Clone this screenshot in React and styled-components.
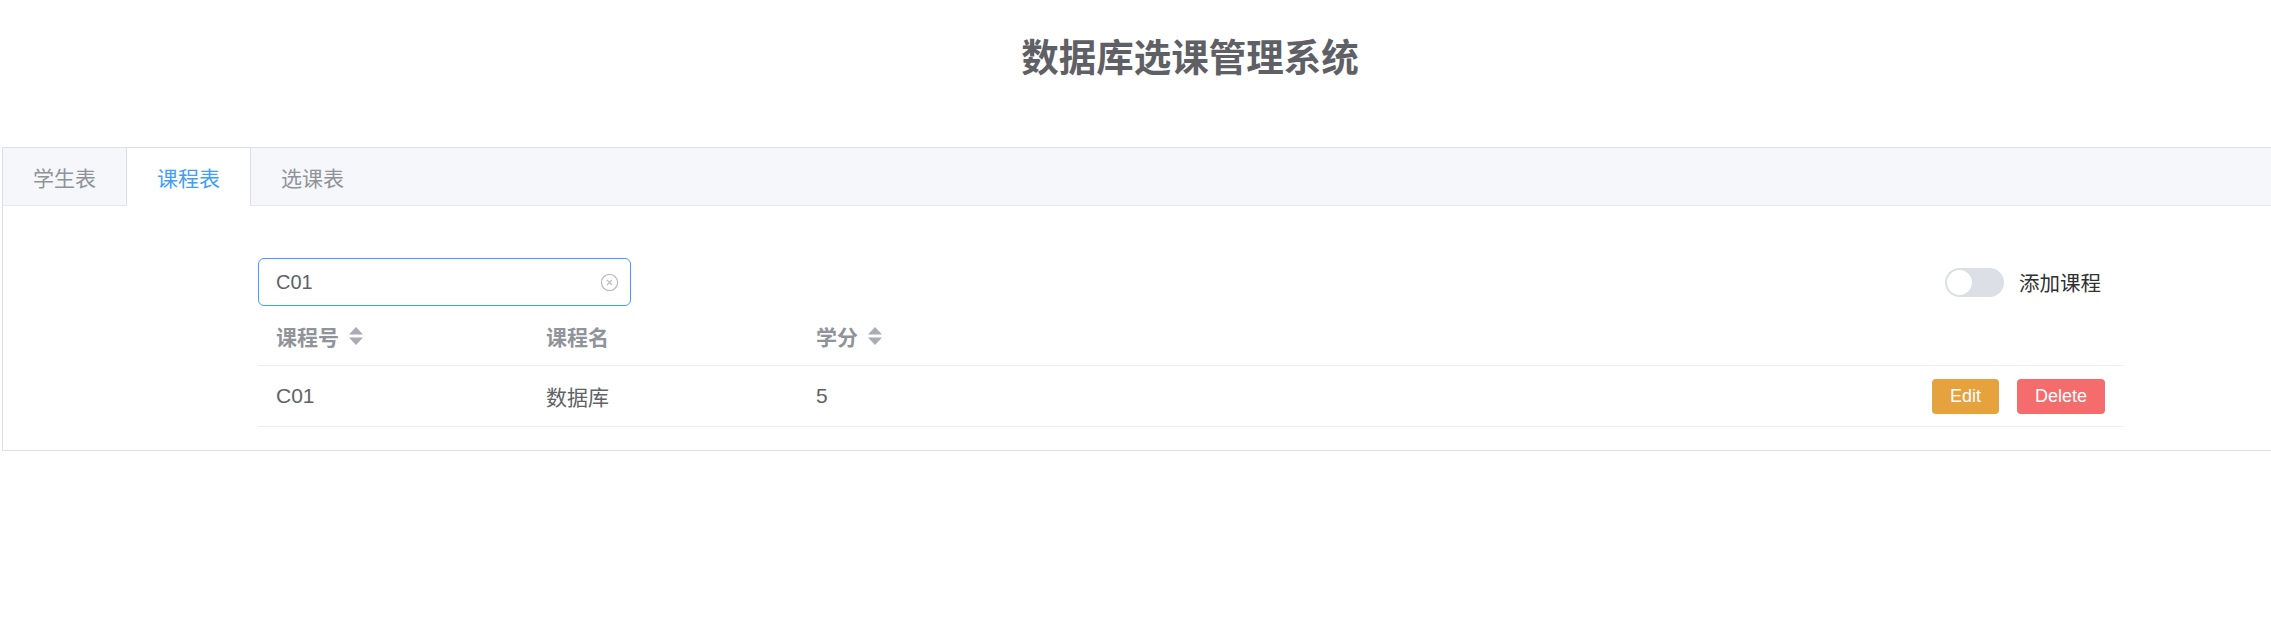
import React from "react";
import styled, { createGlobalStyle } from "styled-components";

const courses = [{ id: "C01", name: "数据库", credit: 5 }];
const tabs = ["学生表", "课程表", "选课表"];

const GlobalStyle = createGlobalStyle`
  html, body {
    margin: 0;
    padding: 0;
    background: #ffffff;
    overflow: hidden;
  }
  body {
    font-family: "Liberation Sans", "Noto Sans CJK SC", sans-serif;
    color: #606266;
  }
`;

const SortIcon = () => (
  <SortCaret viewBox="0 0 16 22" width="16" height="22">
    <path d="M8 2 L15 9.5 L1 9.5 Z" fill="#a9acb3" />
    <path d="M8 20 L15 12.5 L1 12.5 Z" fill="#a9acb3" />
  </SortCaret>
);

const ClearIcon = () => (
  <svg viewBox="0 0 20 20" width="19" height="19">
    <circle cx="10" cy="10" r="8.5" fill="none" stroke="#b9bcc3" strokeWidth="1.3" />
    <path d="M7.3 7.3 L12.7 12.7 M12.7 7.3 L7.3 12.7" stroke="#b9bcc3" strokeWidth="1.3" />
  </svg>
);

export default function App() {
  return (
    <Page>
      <GlobalStyle />
      <Title>数据库选课管理系统</Title>
      <Card>
        <TabNav>
          {tabs.map((t, i) => (
            <Tab key={t} active={i === 1}>
              {t}
            </Tab>
          ))}
        </TabNav>
        <Content>
          <Toolbar>
            <SearchBox>
              <SearchInput value="C01" readOnly spellCheck />
              <ClearIcon />
            </SearchBox>
            <SwitchWrap>
              <Switch>
                <Knob />
              </Switch>
              <SwitchLabel>添加课程</SwitchLabel>
            </SwitchWrap>
          </Toolbar>
          <HeadRow>
            <HeadCell>
              课程号 <SortIcon />
            </HeadCell>
            <HeadCell>课程名</HeadCell>
            <HeadCell>
              学分 <SortIcon />
            </HeadCell>
            <HeadCell />
          </HeadRow>
          {courses.map((c) => (
            <Row key={c.id}>
              <Cell>{c.id}</Cell>
              <Cell>{c.name}</Cell>
              <Cell>{c.credit}</Cell>
              <Actions>
                <Button color="#e6a23c">Edit</Button>
                <Button color="#f56c6c">Delete</Button>
              </Actions>
            </Row>
          ))}
        </Content>
      </Card>
    </Page>
  );
}

const Page = styled.div`
  width: 2380px;
`;

const Title = styled.h1`
  margin: 0;
  height: 110px;
  line-height: 110px;
  text-align: center;
  font-size: 37.5px;
  font-weight: bold;
  color: #5f6066;
  font-family: "Noto Sans CJK SC", sans-serif;
`;

const Card = styled.div`
  margin: 37px 0 0 2px;
  width: 2378px;
  box-sizing: border-box;
  border: 1px solid #dcdfe6;
  background: #ffffff;
`;

const TabNav = styled.div`
  display: flex;
  height: 57px;
  background: #f5f7fa;
  border-bottom: 1px solid #e4e7ed;
`;

const Tab = styled.div`
  display: flex;
  align-items: center;
  padding: 0 ${(p) => (p.active ? "30px" : "29px")};
  height: 58px;
  box-sizing: border-box;
  font-size: 21px;
  font-family: "Noto Sans CJK SC", sans-serif;
  color: ${(p) => (p.active ? "#409eff" : "#909399")};
  background: ${(p) => (p.active ? "#ffffff" : "transparent")};
  border-left: 1px solid ${(p) => (p.active ? "#dcdfe6" : "transparent")};
  border-right: 1px solid ${(p) => (p.active ? "#dcdfe6" : "transparent")};
`;

const Content = styled.div`
  padding: 52px 255px 23px;
`;

const Toolbar = styled.div`
  display: flex;
  align-items: center;
  justify-content: space-between;
  padding-right: 23px;
`;

const SearchBox = styled.div`
  display: flex;
  align-items: center;
  width: 373px;
  height: 48px;
  box-sizing: border-box;
  padding: 0 11px 0 17px;
  border: 1px solid #409eff;
  border-radius: 6px;
`;

const SearchInput = styled.input`
  flex: 1;
  min-width: 0;
  border: none;
  outline: none;
  padding: 0;
  font-size: 20px;
  font-family: "Liberation Sans", "Noto Sans CJK SC", sans-serif;
  color: #606266;
`;

const SwitchWrap = styled.div`
  display: flex;
  align-items: center;
  gap: 15px;
`;

const Switch = styled.div`
  display: flex;
  align-items: center;
  width: 59px;
  height: 29px;
  padding: 0 2px;
  box-sizing: border-box;
  border-radius: 15px;
  background: #dcdfe6;
`;

const Knob = styled.div`
  width: 25px;
  height: 25px;
  border-radius: 50%;
  background: #ffffff;
`;

const SwitchLabel = styled.span`
  font-size: 20.5px;
  color: #303133;
  font-family: "Noto Sans CJK SC", sans-serif;
`;

const HeadRow = styled.div`
  display: grid;
  grid-template-columns: 270px 270px 270px 1fr;
  height: 59px;
  align-items: center;
  border-bottom: 1px solid #ebeef5;
`;

const HeadCell = styled.div`
  display: flex;
  align-items: center;
  gap: 9px;
  padding-left: 18px;
  font-size: 21px;
  font-weight: bold;
  color: #909399;
  font-family: "Noto Sans CJK SC", sans-serif;
`;

const SortCaret = styled.svg`
  display: block;
`;

const Row = styled.div`
  display: grid;
  grid-template-columns: 270px 270px 270px 1fr;
  height: 60px;
  align-items: center;
  border-bottom: 1px solid #ebeef5;
`;

const Cell = styled.div`
  padding-left: 18px;
  font-size: 21px;
  color: #606266;
`;

const Actions = styled.div`
  display: flex;
  justify-content: flex-end;
  gap: 18px;
  padding-right: 19px;
`;

const Button = styled.button`
  height: 35px;
  padding: 0 18px;
  border: none;
  border-radius: 4px;
  background: ${(p) => p.color};
  color: #ffffff;
  font-size: 18px;
  font-family: "Liberation Sans", sans-serif;
  cursor: pointer;
`;
